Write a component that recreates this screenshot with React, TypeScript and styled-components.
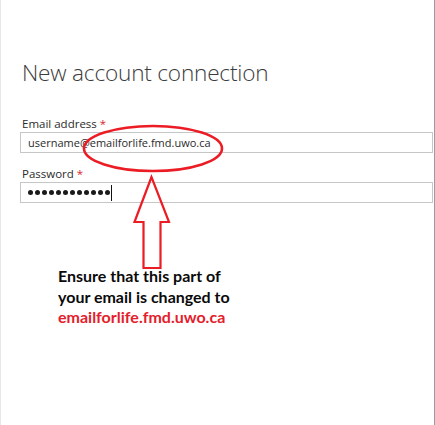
import React from "react";
import styled, { createGlobalStyle } from "styled-components";

const Global = createGlobalStyle`
  html, body { margin: 0; padding: 0; background: #ffffff; }
  #root { width: 435px; height: 425px; }
`;

const Frame = styled.div`
  position: relative;
  width: 435px;
  height: 425px;
  box-sizing: border-box;
  border-left: 1px solid #e6e6e6;
  border-right: 1px solid #9c9c9c;
  background: #fff;
  overflow: hidden;
  display: flex;
  flex-direction: column;
  padding: 0 1px 0 19px;
`;

const Title = styled.h1`
  margin: 56px 0 0 2px;
  font-family: "Open Sans", "Segoe UI", sans-serif;
  font-weight: 300;
  font-size: 22.6px;
  line-height: 34px;
  color: #3b3b3b;
  letter-spacing: -0.2px;
`;

const Form = styled.div`
  display: flex;
  flex-direction: column;
  margin-top: 26px;
`;

const Label = styled.label`
  font-family: "Open Sans", "Segoe UI", sans-serif;
  font-size: 11.5px;
  line-height: 16px;
  color: #2b2b2b;
  margin-left: 2px;
  display: flex;
  gap: 3px;
`;

const Star = styled.span`
  color: #d9262e;
`;

const Field = styled.div<{ $gap?: number }>`
  box-sizing: border-box;
  height: 21px;
  border: 1px solid #c6c6c6;
  display: flex;
  align-items: center;
  padding-left: 7px;
  margin-bottom: ${(p) => p.$gap ?? 0}px;
  font-family: "Open Sans", "Segoe UI", sans-serif;
  font-size: 11px;
  color: #2b2b2b;
`;

const Dots = styled.div`
  display: flex;
  gap: 2px;
  align-items: center;
`;

const Dot = styled.span`
  width: 5px;
  height: 5px;
  border-radius: 50%;
  background: #1a1a1a;
`;

const Caret = styled.span`
  width: 1px;
  height: 16px;
  background: #111;
  margin-left: 1px;
`;

const Note = styled.div`
  margin: 63px 0 0 38px;
  font-family: "Lato", "Calibri", sans-serif;
  font-weight: 700;
  font-size: 16px;
  line-height: 20.5px;
  color: #0a0a0a;
`;

const Red = styled.span`
  color: #e3202b;
`;

const Overlay = styled.svg`
  position: absolute;
  left: 0;
  top: 0;
  pointer-events: none;
`;

export default function App() {
  return (
    <>
      <Global />
      <Frame>
        <Title>New account connection</Title>
        <Form>
          <Label>
            Email address<Star>*</Star>
          </Label>
          <Field $gap={13}>username@emailforlife.fmd.uwo.ca</Field>
          <Label>
            Password<Star>*</Star>
          </Label>
          <Field>
            <Dots>
              {Array.from({ length: 12 }).map((_, i) => (
                <Dot key={i} />
              ))}
            </Dots>
            <Caret />
          </Field>
        </Form>
        <Note>
          Ensure that this part of
          <br />
          your email is changed to
          <br />
          <Red>emailforlife.fmd.uwo.ca</Red>
        </Note>
        <Overlay width="435" height="425" viewBox="0 0 435 425">
          <ellipse cx="152" cy="148.5" rx="69" ry="22.5" fill="none" stroke="#ec1c24" strokeWidth="2.6" />
          <polygon
            points="150.5,177 133.5,222 142.5,222 142.5,268 159.5,268 159.5,222 168,222"
            fill="none"
            stroke="#ec1c24"
            strokeWidth="2.2"
            strokeLinejoin="miter"
          />
        </Overlay>
      </Frame>
    </>
  );
}
